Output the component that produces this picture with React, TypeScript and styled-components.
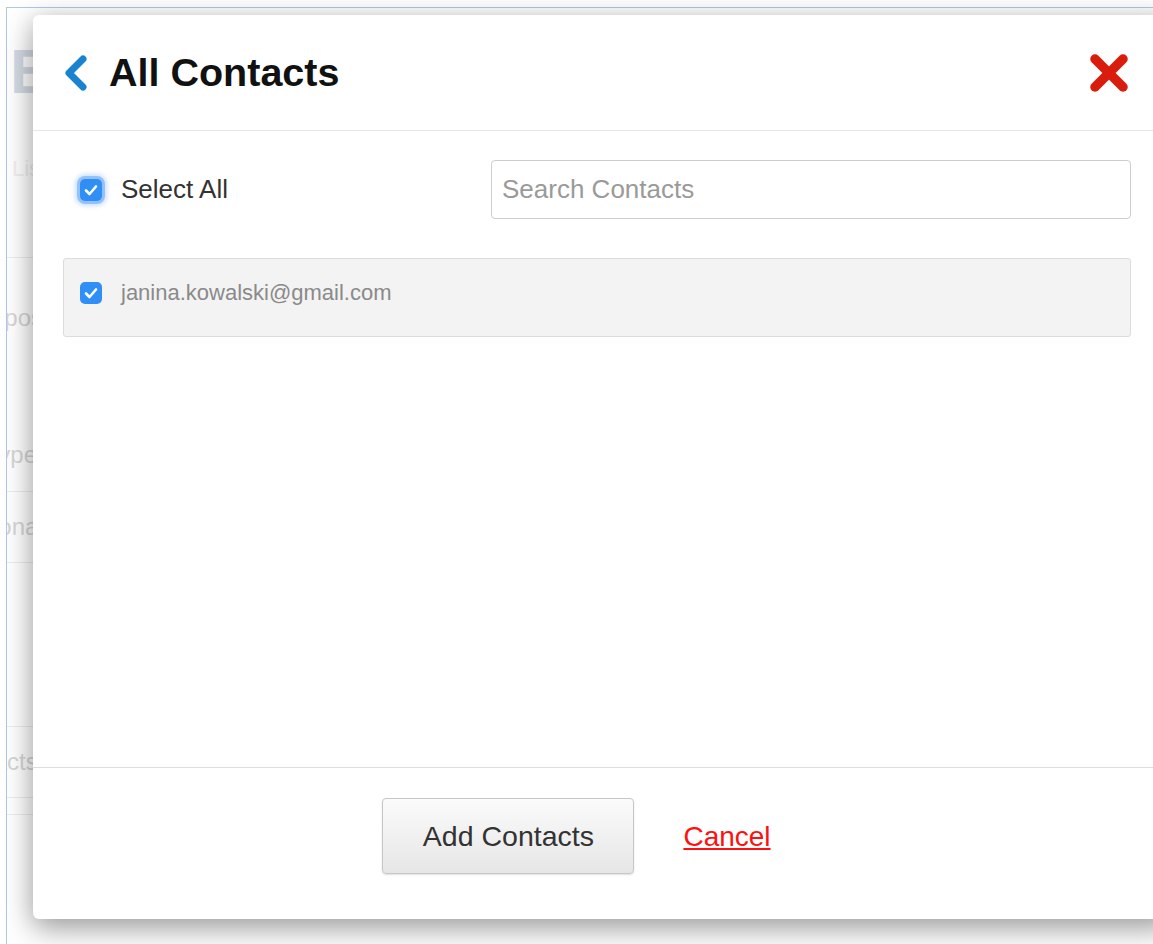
import React from "react";
import styled, { createGlobalStyle } from "styled-components";

const GlobalStyle = createGlobalStyle`
  html, body {
    margin: 0;
    padding: 0;
    background: #fff;
    font-family: "Liberation Sans", Arial, Helvetica, sans-serif;
  }
`;

const Screen = styled.div`
  position: relative;
  width: 100vw;
  height: 944px;
  overflow: hidden;
  background: #fff;
`;

/* page that sits under the dialog */
const Frame = styled.div`
  margin: 7px 0 0 6px;
  height: 937px;
  border-top: 1px solid #b1c9e8;
  border-left: 1px solid #b1c9e8;
  overflow: hidden;
  display: flex;
  flex-direction: column;
`;

const BgRow = styled.div<{ $h: number; $line?: boolean; $align?: string }>`
  height: ${(p) => p.$h}px;
  flex: none;
  box-sizing: border-box;
  display: flex;
  align-items: ${(p) => p.$align || "center"};
  border-bottom: ${(p) => (p.$line ? "1px solid #ececec" : "none")};
`;

const BgHeading = styled.div`
  margin-left: 3px;
  margin-top: 4px;
  font-size: 63px;
  font-weight: bold;
  color: #d4dbe4;
`;

const BgLabel = styled.div<{ $right: number; $top?: number }>`
  width: 80px;
  margin-left: ${(p) => p.$right - 80}px;
  margin-top: ${(p) => p.$top ?? 0}px;
  text-align: right;
  font-size: 24px;
  color: #d6d6d6;
  white-space: nowrap;
`;

const BgSmall = styled.div`
  margin: 26px 0 0 5px;
  font-size: 22px;
  color: #efefef;
`;

/* dialog */
const Modal = styled.div`
  position: absolute;
  left: 33px;
  top: 15px;
  width: 1140px;
  height: 904px;
  background: #fff;
  border-radius: 6px;
  box-shadow: 0 10px 30px rgba(0, 0, 0, 0.36), 0 0 22px rgba(0, 0, 0, 0.08);
  display: flex;
  flex-direction: column;
`;

const Header = styled.div`
  height: 115px;
  flex: none;
  display: flex;
  align-items: center;
  padding: 0 43px 0 29px;
  border-bottom: 1px solid #e6e6e6;
`;

const BackButton = styled.button`
  border: 0;
  background: none;
  padding: 0;
  width: 28px;
  height: 40px;
  display: flex;
  align-items: center;
  cursor: pointer;
`;

const Title = styled.h1`
  margin: 0 0 0 19px;
  font-size: 39.5px;
  font-weight: bold;
  color: #111;
`;

const CloseButton = styled.button`
  margin-left: auto;
  border: 0;
  background: none;
  padding: 0;
  width: 42px;
  height: 40px;
  cursor: pointer;
`;

const Body = styled.div`
  flex: 1;
  padding: 29px 42px 0 30px;
  display: flex;
  flex-direction: column;
`;

const Toolbar = styled.div`
  display: flex;
  align-items: center;
  justify-content: space-between;
`;

const CheckLabel = styled.label`
  display: flex;
  align-items: center;
  gap: 19px;
  margin-left: 17px;
  font-size: 26px;
  color: #333;
`;

const Box = styled.span<{ $focus?: boolean; $size: number }>`
  width: ${(p) => p.$size}px;
  height: ${(p) => p.$size}px;
  border-radius: 5px;
  background: #2f8ff7;
  display: flex;
  align-items: center;
  justify-content: center;
  flex: none;
  box-shadow: ${(p) =>
    p.$focus
      ? "0 0 0 3px rgba(110, 170, 250, 0.6), 0 0 4px 5px rgba(110, 170, 250, 0.35)"
      : "none"};
`;

const Search = styled.input`
  width: 640px;
  height: 59px;
  box-sizing: border-box;
  border: 1px solid #cdcdcd;
  border-radius: 4px;
  padding: 0 10px;
  font-family: inherit;
  font-size: 26px;
  color: #333;
  outline: none;
  &::placeholder {
    color: #9a9a9a;
  }
`;

const List = styled.div`
  margin-top: 39px;
  display: flex;
  flex-direction: column;
`;

const ContactRow = styled.label`
  height: 79px;
  box-sizing: border-box;
  background: #f3f3f3;
  border: 1px solid #dcdcdc;
  border-radius: 3px;
  display: flex;
  align-items: flex-start;
  gap: 19px;
  padding: 23px 16px 0;
  font-size: 22px;
  color: #8a8a8a;
`;

const Email = styled.span`
  line-height: 22px;
`;

const Footer = styled.div`
  height: 152px;
  flex: none;
  border-top: 1px solid #dedede;
  display: flex;
  justify-content: center;
  align-items: flex-start;
  gap: 49px;
  padding: 30px 53px 0 0;
  box-sizing: border-box;
`;

const AddButton = styled.button`
  width: 252px;
  height: 76px;
  border: 1px solid #c6c6c6;
  border-radius: 4px;
  background: linear-gradient(#fbfbfb, #e6e6e6);
  box-shadow: 0 1px 2px rgba(0, 0, 0, 0.12);
  font-family: inherit;
  font-size: 28.5px;
  color: #333;
  cursor: pointer;
`;

const CancelLink = styled.a`
  margin-top: 23px;
  font-size: 28px;
  color: #ff1010;
  text-decoration: underline;
  cursor: pointer;
`;

const Check = () => (
  <svg width="14" height="12" viewBox="0 0 14 12">
    <polyline
      points="2,6.5 5.5,10 12,2.5"
      fill="none"
      stroke="#fff"
      strokeWidth="2.6"
      strokeLinecap="round"
      strokeLinejoin="round"
    />
  </svg>
);

const App = () => {
  return (
    <Screen>
      <GlobalStyle />
      <Frame>
        <BgRow $h={122}>
          <BgHeading>Bulk</BgHeading>
        </BgRow>
        <BgRow $h={128} $line $align="flex-start">
          <BgSmall>List</BgSmall>
        </BgRow>
        <BgRow $h={120}>
          <BgLabel $right={40}>Purpose</BgLabel>
        </BgRow>
        <BgRow $h={114} $line $align="flex-start">
          <BgLabel $right={30} $top={63}>
            Type
          </BgLabel>
        </BgRow>
        <BgRow $h={71} $line>
          <BgLabel $right={22}>Personal</BgLabel>
        </BgRow>
        <BgRow $h={164} $line />
        <BgRow $h={71} $line>
          <BgLabel $right={16}>Contacts</BgLabel>
        </BgRow>
        <BgRow $h={17} $line />
      </Frame>

      <Modal>
        <Header>
          <BackButton aria-label="Back">
            <svg width="26" height="38" viewBox="0 0 26 38">
              <polyline
                points="21,5 7,19 21,33"
                fill="none"
                stroke="#1a83cf"
                strokeWidth="7"
                strokeLinecap="round"
                strokeLinejoin="round"
              />
            </svg>
          </BackButton>
          <Title>All Contacts</Title>
          <CloseButton aria-label="Close">
            <svg width="42" height="40" viewBox="0 0 42 40">
              <g stroke="#d91c0b" strokeWidth="9.5" strokeLinecap="round">
                <line x1="7" y1="6" x2="35" y2="34" />
                <line x1="35" y1="6" x2="7" y2="34" />
              </g>
            </svg>
          </CloseButton>
        </Header>

        <Body>
          <Toolbar>
            <CheckLabel>
              <Box $focus $size={22}>
                <Check />
              </Box>
              Select All
            </CheckLabel>
            <Search placeholder="Search Contacts" />
          </Toolbar>

          <List>
            <ContactRow>
              <Box $size={22}>
                <Check />
              </Box>
              <Email>janina.kowalski@gmail.com</Email>
            </ContactRow>
          </List>
        </Body>

        <Footer>
          <AddButton>Add Contacts</AddButton>
          <CancelLink>Cancel</CancelLink>
        </Footer>
      </Modal>
    </Screen>
  );
};

export default App;
